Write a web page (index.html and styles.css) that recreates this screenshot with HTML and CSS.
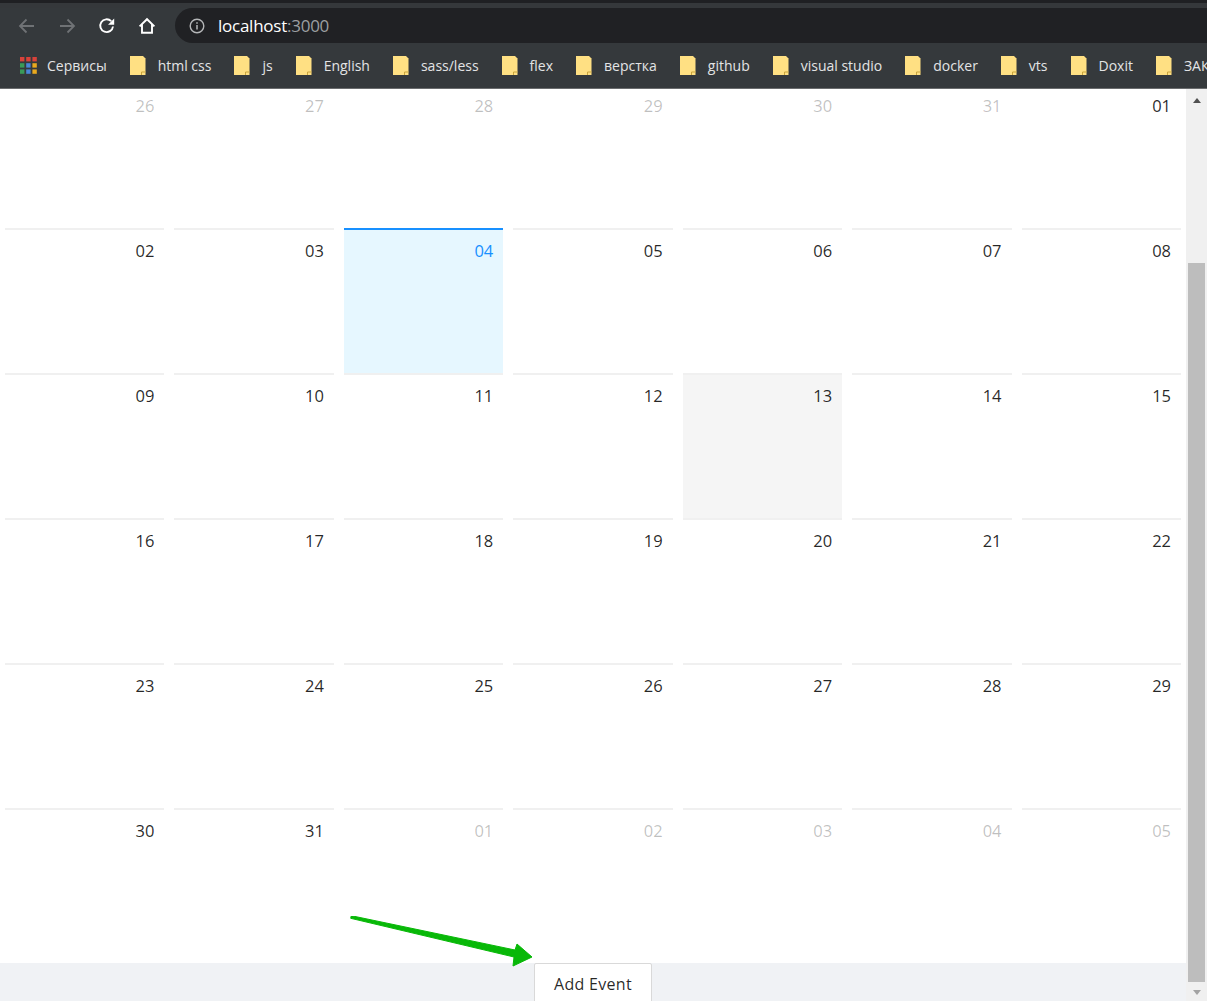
FILE: index.html
```html
<!DOCTYPE html>
<html lang="ru">
<head>
    <meta charset="UTF-8">
    <title>Calendar</title>
    <link rel="stylesheet" href="styles.css">
</head>
<body>
    <div class="browser-top">
        <div class="tab-strip"></div>
        <div class="toolbar">
            <div class="nav-icons">
                <svg width="20" height="20" viewBox="0 0 20 20"><path d="M17 10H3M9.5 3.5 3 10l6.5 6.5" fill="none" stroke="#6f7275" stroke-width="1.8"/></svg>
                <svg width="20" height="20" viewBox="0 0 20 20"><path d="M3 10h14M10.5 3.5 17 10l-6.5 6.5" fill="none" stroke="#6f7275" stroke-width="1.8"/></svg>
                <svg width="20" height="20" viewBox="0 0 20 20"><path d="M16 10.5A6.4 6.4 0 1 1 14.2 5.2" fill="none" stroke="#fff" stroke-width="1.9"/><path d="M17.2 2.5v6.2H11z" fill="#fff"/></svg>
                <svg width="20" height="20" viewBox="0 0 20 20"><path d="M2.6 10.4 10 3.2l7.4 7.2M5 8.6v8.2h10V8.6" fill="none" stroke="#fff" stroke-width="1.9"/></svg>
            </div>
            <div class="address">
                <svg width="16" height="16" viewBox="0 0 16 16"><circle cx="8" cy="8" r="6.8" fill="none" stroke="#b4b6b8" stroke-width="1.4"/><path d="M8 7v4.6M8 4.2v1.6" stroke="#b4b6b8" stroke-width="1.5"/></svg>
                <span class="host">localhost<span class="port">:3000</span></span>
            </div>
        </div>
        <div class="bookmarks">
            <span class="bookmark bookmark-apps">
                <svg width="17" height="17" viewBox="0 0 17 17">
                    <rect width="4.4" height="4.4" fill="#d9423a"/><rect x="6.2" width="4.4" height="4.4" fill="#d9423a"/><rect x="12.4" width="4.4" height="4.4" fill="#d9423a"/>
                    <rect y="6.2" width="4.4" height="4.4" fill="#3a9a58"/><rect x="6.2" y="6.2" width="4.4" height="4.4" fill="#4a86d8"/><rect x="12.4" y="6.2" width="4.4" height="4.4" fill="#e9a91e"/>
                    <rect y="12.4" width="4.4" height="4.4" fill="#3a9a58"/><rect x="6.2" y="12.4" width="4.4" height="4.4" fill="#4a86d8"/><rect x="12.4" y="12.4" width="4.4" height="4.4" fill="#e9a91e"/>
                </svg>
                Сервисы
            </span>
            <span class="bookmark"><svg class="folder" viewBox="0 0 16 19"><path d="M0 0h13l2.5 2.5V19H0z" fill="#ffe083"/><path d="M11.5 19v-3h4" fill="none" stroke="#c9a43c"/></svg>html css</span>
            <span class="bookmark"><svg class="folder" viewBox="0 0 16 19"><path d="M0 0h13l2.5 2.5V19H0z" fill="#ffe083"/><path d="M11.5 19v-3h4" fill="none" stroke="#c9a43c"/></svg>js</span>
            <span class="bookmark"><svg class="folder" viewBox="0 0 16 19"><path d="M0 0h13l2.5 2.5V19H0z" fill="#ffe083"/><path d="M11.5 19v-3h4" fill="none" stroke="#c9a43c"/></svg>English</span>
            <span class="bookmark"><svg class="folder" viewBox="0 0 16 19"><path d="M0 0h13l2.5 2.5V19H0z" fill="#ffe083"/><path d="M11.5 19v-3h4" fill="none" stroke="#c9a43c"/></svg>sass/less</span>
            <span class="bookmark"><svg class="folder" viewBox="0 0 16 19"><path d="M0 0h13l2.5 2.5V19H0z" fill="#ffe083"/><path d="M11.5 19v-3h4" fill="none" stroke="#c9a43c"/></svg>flex</span>
            <span class="bookmark"><svg class="folder" viewBox="0 0 16 19"><path d="M0 0h13l2.5 2.5V19H0z" fill="#ffe083"/><path d="M11.5 19v-3h4" fill="none" stroke="#c9a43c"/></svg>верстка</span>
            <span class="bookmark"><svg class="folder" viewBox="0 0 16 19"><path d="M0 0h13l2.5 2.5V19H0z" fill="#ffe083"/><path d="M11.5 19v-3h4" fill="none" stroke="#c9a43c"/></svg>github</span>
            <span class="bookmark"><svg class="folder" viewBox="0 0 16 19"><path d="M0 0h13l2.5 2.5V19H0z" fill="#ffe083"/><path d="M11.5 19v-3h4" fill="none" stroke="#c9a43c"/></svg>visual studio</span>
            <span class="bookmark"><svg class="folder" viewBox="0 0 16 19"><path d="M0 0h13l2.5 2.5V19H0z" fill="#ffe083"/><path d="M11.5 19v-3h4" fill="none" stroke="#c9a43c"/></svg>docker</span>
            <span class="bookmark"><svg class="folder" viewBox="0 0 16 19"><path d="M0 0h13l2.5 2.5V19H0z" fill="#ffe083"/><path d="M11.5 19v-3h4" fill="none" stroke="#c9a43c"/></svg>vts</span>
            <span class="bookmark"><svg class="folder" viewBox="0 0 16 19"><path d="M0 0h13l2.5 2.5V19H0z" fill="#ffe083"/><path d="M11.5 19v-3h4" fill="none" stroke="#c9a43c"/></svg>Doxit</span>
            <span class="bookmark"><svg class="folder" viewBox="0 0 16 19"><path d="M0 0h13l2.5 2.5V19H0z" fill="#ffe083"/><path d="M11.5 19v-3h4" fill="none" stroke="#c9a43c"/></svg>ЗАКАЗЫ</span>
        </div>
    </div>

    <div class="viewport">
        <div class="content">
            <div class="calendar">
                <div class="calendar-grid">
                    <div class="cell muted">26</div><div class="cell muted">27</div><div class="cell muted">28</div><div class="cell muted">29</div><div class="cell muted">30</div><div class="cell muted">31</div><div class="cell">01</div>
                    <div class="cell">02</div><div class="cell">03</div><div class="cell selected">04</div><div class="cell">05</div><div class="cell">06</div><div class="cell">07</div><div class="cell">08</div>
                    <div class="cell">09</div><div class="cell">10</div><div class="cell">11</div><div class="cell">12</div><div class="cell hovered">13</div><div class="cell">14</div><div class="cell">15</div>
                    <div class="cell">16</div><div class="cell">17</div><div class="cell">18</div><div class="cell">19</div><div class="cell">20</div><div class="cell">21</div><div class="cell">22</div>
                    <div class="cell">23</div><div class="cell">24</div><div class="cell">25</div><div class="cell">26</div><div class="cell">27</div><div class="cell">28</div><div class="cell">29</div>
                    <div class="cell">30</div><div class="cell">31</div><div class="cell muted">01</div><div class="cell muted">02</div><div class="cell muted">03</div><div class="cell muted">04</div><div class="cell muted">05</div>
                </div>
            </div>
            <div class="footer">
                <button class="add-event">Add Event</button>
            </div>
        </div>
        <div class="scrollbar">
            <span class="arrow-up"></span>
            <div class="scroll-track"><div class="scroll-thumb"></div></div>
            <span class="arrow-down"></span>
        </div>
    </div>

    <!-- annotation drawn over the screenshot -->
    <svg class="annotation" width="200" height="60" viewBox="0 0 200 60">
        <path d="M1.3-.3 165 34l2-6 15 13-19 9 1-9L.7 2.3z" fill="#08b808" stroke="#08b808" stroke-linejoin="round"/>
    </svg>
</body>
</html>
```

FILE: styles.css
```css
* {
    box-sizing: border-box;
    margin: 0;
    padding: 0;
}

html, body {
    height: 100%;
    overflow: hidden;
}

body {
    font-family: 'Open Sans', 'Noto Sans', sans-serif;
    display: flex;
    flex-direction: column;
    background: #fff;
    color: rgba(0, 0, 0, 0.85);
}

.browser-top {
    height: 89px;
    flex: none;
    background: #35393c;
    border-bottom: 1px solid #6a6c6e;
    overflow: hidden;
}

.tab-strip {
    height: 8px;
    background: #35383b;
    border-top: 3px solid #1f2023;
}

.toolbar {
    display: flex;
    align-items: center;
    height: 35px;
    padding-left: 17px;
    gap: 18px;
}

.nav-icons {
    display: flex;
    gap: 20px;
}

.address {
    flex: 1;
    height: 35px;
    background: #202124;
    border-radius: 18px 0 0 18px;
    display: flex;
    align-items: center;
    padding-left: 14px;
    gap: 13px;
}

.host {
    color: #fff;
    font-size: 17px;
    letter-spacing: -0.25px;
}

.port {
    color: #9c9fa1;
}

.bookmarks {
    display: flex;
    align-items: center;
    height: 45px;
    padding-left: 20px;
    gap: 23px;
    white-space: nowrap;
    color: #e3e4e5;
    font-size: 14px;
}

.bookmark {
    display: flex;
    align-items: center;
    flex: none;
    gap: 12px;
}

.bookmark-apps {
    gap: 10px;
}

.folder {
    width: 16px;
    height: 19px;
}

.viewport {
    flex: 1;
    display: flex;
    min-height: 0;
}

.content {
    flex: 1;
    display: flex;
    flex-direction: column;
    min-width: 0;
}

.calendar {
    flex: 1;
    overflow: hidden;
    background: #fff;
}

.calendar-grid {
    display: grid;
    grid-template-columns: repeat(7, 1fr);
    column-gap: 10px;
    margin: -6px 5px 0 5px;
}

.cell {
    height: 145px;
    border-top: 2px solid #f0f0f0;
    padding: 9px 10px 0 0;
    text-align: right;
    font-size: 16.5px;
    line-height: 24px;
}

.muted {
    color: rgba(0, 0, 0, 0.25);
}

.selected {
    background: #e6f7ff;
    border-top-color: #1890ff;
    color: #1890ff;
}

.hovered {
    background: #f5f5f5;
}

.footer {
    flex: none;
    height: 38px;
    background: #f0f2f5;
    display: flex;
    justify-content: center;
}

.add-event {
    width: 118px;
    height: 42px;
    background: #fff;
    border: 1px solid #d9d9d9;
    border-radius: 2px;
    font-family: inherit;
    font-size: 16px;
    letter-spacing: 0.3px;
    color: rgba(0, 0, 0, 0.85);
    cursor: pointer;
}

.scrollbar {
    width: 21px;
    flex: none;
    background: #f0f0f0;
    display: flex;
    flex-direction: column;
    align-items: center;
}

.arrow-up {
    margin-top: 9px;
    border: 4px solid transparent;
    border-top: 0;
    border-bottom: 5px solid #505050;
}

.scroll-track {
    flex: 1;
    width: 17px;
    padding-top: 160px;
    padding-bottom: 8px;
    display: flex;
}

.scroll-thumb {
    flex: 1;
    background: #bdbdbd;
}

.arrow-down {
    margin-bottom: 6px;
    border: 4px solid transparent;
    border-bottom: 0;
    border-top: 5px solid #a3a3a3;
}

.annotation {
    position: absolute;
    left: 350px;
    top: 916px;
}
```
